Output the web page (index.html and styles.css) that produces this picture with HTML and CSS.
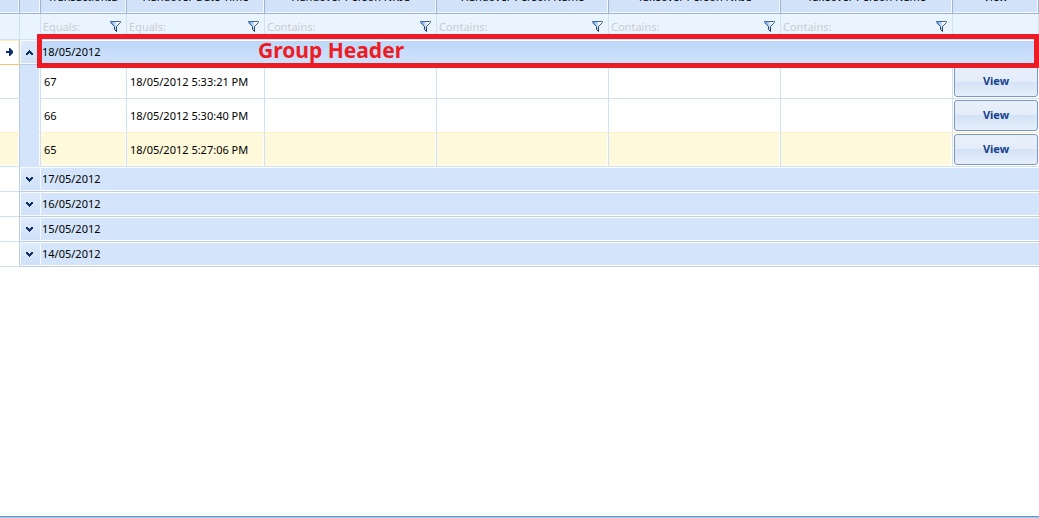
FILE: index.html
```
<!DOCTYPE html>
<html lang="en">
<head>
    <meta charset="UTF-8">
    <title>Handover transactions</title>
    <link rel="stylesheet" href="styles.css">
</head>
<body>
<svg class="defs" width="0" height="0">
    <linearGradient id="fill" x1="0" x2="1">
        <stop offset="0.2" stop-color="#7fb4e8"/>
        <stop offset="0.7" stop-color="#ffffff"/>
    </linearGradient>
    <linearGradient id="edge" x1="0" x2="0" y1="0" y2="1">
        <stop offset="0" stop-color="#3f659c"/>
        <stop offset="1" stop-color="#16305e"/>
    </linearGradient>
    <symbol id="funnel" viewBox="0 0 11 11">
        <path d="M0.5 0.5h10v1L6.5 5.5v5l-2-2v-3L0.5 1.5z" fill="url(#fill)" stroke="url(#edge)"/>
    </symbol>
    <symbol id="down" viewBox="0 0 7 5">
        <path d="M0 0h2v1h1v1h1V1h1V0h2v2H6v1H5v1H4v1H3V4H2V3H1V2H0z" fill="#0f2f66"/>
    </symbol>
    <symbol id="up" viewBox="0 0 7 5">
        <path d="M0 5h2V4h1V3h1v1h1v1h2V3H6V2H5V1H4V0H3v1H2v1H1v1H0z" fill="#0f2f66"/>
    </symbol>
    <symbol id="arrow" viewBox="0 0 7 8">
        <path d="M0 3h3V0h1l3 3v2L4 8H3V5H0z" fill="#0f2f66"/>
    </symbol>
</svg>
<div id="grid">
    <table>
        <colgroup>
            <col class="c-mark">
            <col class="c-indent">
            <col class="c-id">
            <col class="c-date">
            <col class="c-person">
            <col class="c-person">
            <col class="c-person">
            <col class="c-person">
            <col class="c-view">
        </colgroup>
        <thead>
        <tr class="head">
            <th></th>
            <th></th>
            <th><div>TransactionID</div></th>
            <th><div>Handover Date Time</div></th>
            <th><div>Handover Person NRIC</div></th>
            <th><div>Handover Person Name</div></th>
            <th><div>Takeover Person NRIC</div></th>
            <th><div>Takeover Person Name</div></th>
            <th><div>View</div></th>
        </tr>
        <tr class="filter">
            <td></td>
            <td></td>
            <td><div><input type="text" placeholder="Equals:" aria-label="TransactionID"><button aria-label="Filter"><svg><use href="#funnel"/></svg></button></div></td>
            <td><div><input type="text" placeholder="Equals:" aria-label="Handover Date Time"><button aria-label="Filter"><svg><use href="#funnel"/></svg></button></div></td>
            <td><div><input type="text" placeholder="Contains:" aria-label="Handover Person NRIC"><button aria-label="Filter"><svg><use href="#funnel"/></svg></button></div></td>
            <td><div><input type="text" placeholder="Contains:" aria-label="Handover Person Name"><button aria-label="Filter"><svg><use href="#funnel"/></svg></button></div></td>
            <td><div><input type="text" placeholder="Contains:" aria-label="Takeover Person NRIC"><button aria-label="Filter"><svg><use href="#funnel"/></svg></button></div></td>
            <td><div><input type="text" placeholder="Contains:" aria-label="Takeover Person Name"><button aria-label="Filter"><svg><use href="#funnel"/></svg></button></div></td>
            <td></td>
        </tr>
        </thead>
        <tbody>
        <tr class="group current">
            <td class="mark"><svg class="arrow"><use href="#arrow"/></svg></td>
            <td class="toggle"><button aria-label="Collapse"><svg><use href="#up"/></svg></button></td>
            <td class="name" colspan="7">18/05/2012<div class="note">Group Header</div></td>
        </tr>
        <tr class="row">
            <td class="mark"></td>
            <td class="indent"></td>
            <td>67</td>
            <td>18/05/2012 5:33:21 PM</td>
            <td></td>
            <td></td>
            <td></td>
            <td></td>
            <td class="action"><button>View</button></td>
        </tr>
        <tr class="row before-hot">
            <td class="mark"></td>
            <td class="indent"></td>
            <td>66</td>
            <td>18/05/2012 5:30:40 PM</td>
            <td></td>
            <td></td>
            <td></td>
            <td></td>
            <td class="action"><button>View</button></td>
        </tr>
        <tr class="row hot">
            <td class="mark"></td>
            <td class="indent"></td>
            <td>65</td>
            <td>18/05/2012 5:27:06 PM</td>
            <td></td>
            <td></td>
            <td></td>
            <td></td>
            <td class="action"><button>View</button></td>
        </tr>
        <tr class="group">
            <td class="mark"></td>
            <td class="toggle"><button aria-label="Expand"><svg><use href="#down"/></svg></button></td>
            <td class="name" colspan="7">17/05/2012</td>
        </tr>
        <tr class="group">
            <td class="mark"></td>
            <td class="toggle"><button aria-label="Expand"><svg><use href="#down"/></svg></button></td>
            <td class="name" colspan="7">16/05/2012</td>
        </tr>
        <tr class="group">
            <td class="mark"></td>
            <td class="toggle"><button aria-label="Expand"><svg><use href="#down"/></svg></button></td>
            <td class="name" colspan="7">15/05/2012</td>
        </tr>
        <tr class="group">
            <td class="mark"></td>
            <td class="toggle"><button aria-label="Expand"><svg><use href="#down"/></svg></button></td>
            <td class="name" colspan="7">14/05/2012</td>
        </tr>
        </tbody>
    </table>
</div>
</body>
</html>
```
FILE: styles.css
```
* {
    margin: 0;
    padding: 0;
    box-sizing: border-box;
}

body {
    font: 11px/16px "Noto Sans", "Open Sans", sans-serif;
    color: #000;
    background: #fff;
}

.defs {
    position: absolute;
}

#grid {
    min-height: 100vh;
    overflow: hidden;
    border-bottom: 1px solid #a9c8f0;
    box-shadow: inset 0 -1px #6593cf;
}

table {
    width: 100%;
    table-layout: fixed;
    border-collapse: separate;
    border-spacing: 0;
}

.c-mark {
    width: 20px;
}

.c-indent {
    width: 21px;
}

.c-id {
    width: 86px;
}

.c-date {
    width: 138px;
}

.c-person {
    width: 172px;
}

button {
    font: inherit;
    border: none;
    background: none;
    cursor: pointer;
}

svg {
    display: block;
}

/* header, scrolled half out of view */
.head th {
    height: 14px;
    border-right: 1px solid #9db3cf;
    border-bottom: 1px solid #9db3cf;
    background: #d2e2f9;
    box-shadow: inset -1px -1px #f4f9ff;
    font-weight: normal;
    white-space: nowrap;
}

.head div {
    display: flex;
    height: 13px;
    align-items: flex-end;
    justify-content: center;
    padding-bottom: 8px;
}

.filter td {
    height: 26px;
    border-right: 1px solid #d0e0f6;
    border-bottom: 1px solid #d0e0f6;
    background: #eaf4ff;
}

.filter div {
    display: flex;
    align-items: center;
    padding: 0 5px 0 2px;
}

.filter input {
    flex: 1;
    min-width: 0;
    font: inherit;
    border: none;
    outline: none;
    background: none;
}

.filter input::placeholder {
    color: #c9ccd0;
    opacity: 1;
}

.filter svg {
    width: 11px;
    height: 11px;
}

.mark {
    border-right: 1px solid #bccce2;
    border-bottom: 1px solid #d0e0f6;
}

.mark .arrow {
    width: 7px;
    height: 8px;
    margin: 0 auto;
}

.current .mark {
    border-bottom-color: #fbc36b;
    box-shadow: inset 0 1px #fff0b3, inset -1px 0 #fff0b3;
}

.group td {
    height: 25px;
}

.toggle {
    padding-right: 2px;
    border-bottom: 1px solid #bccce2;
    background: linear-gradient(#deebfb, #cfe0f7);
    box-shadow: inset 0 0 0 1px #f4f9ff;
}

.toggle button {
    display: block;
    margin: 0 auto;
    padding: 4px;
}

.toggle svg {
    width: 7px;
    height: 5px;
}

.name {
    position: relative;
    padding-left: 1px;
    border-bottom: 1px solid #bccce2;
    background: #d4e5fb;
    box-shadow: inset 0 1px #fff, inset 0 -1px #fff;
}

.current .name {
    background: linear-gradient(#bdd6f8, #d0e2fb);
}

.note {
    position: absolute;
    top: -6px;
    left: -4px;
    right: 0;
    height: 34px;
    padding-left: 216px;
    border: 5px solid #ed1c24;
    color: #ed1c24;
    font: bold 21px/22px "Noto Sans", sans-serif;
}

.row td {
    height: 34px;
    padding-left: 3px;
    border-right: 1px solid #d0e0f6;
    border-bottom: 1px solid #d0e0f6;
    white-space: nowrap;
}

.row .mark {
    border-right-color: #bccce2;
}

.row .indent {
    background: #d4e5fb;
    border-bottom-color: #d4e5fb;
    box-shadow: inset -1px 0 #fff;
}

.row .action {
    padding: 0 1px;
    border-right: none;
}

.action button {
    display: block;
    width: 100%;
    height: 31px;
    padding-bottom: 2px;
    border: 1px solid #7b98c2;
    border-radius: 3px;
    background: linear-gradient(#e9f0fb, #e3ecf9 50%, #d3e2f5 50%, #e6effb);
    color: #15428b;
    font-weight: bold;
}

.before-hot td:not(.indent) {
    border-bottom-color: #fff0c8;
}

.hot td:not(.indent):not(.action) {
    background: #fef9da;
    box-shadow: inset -1px -1px #fff;
}
```
